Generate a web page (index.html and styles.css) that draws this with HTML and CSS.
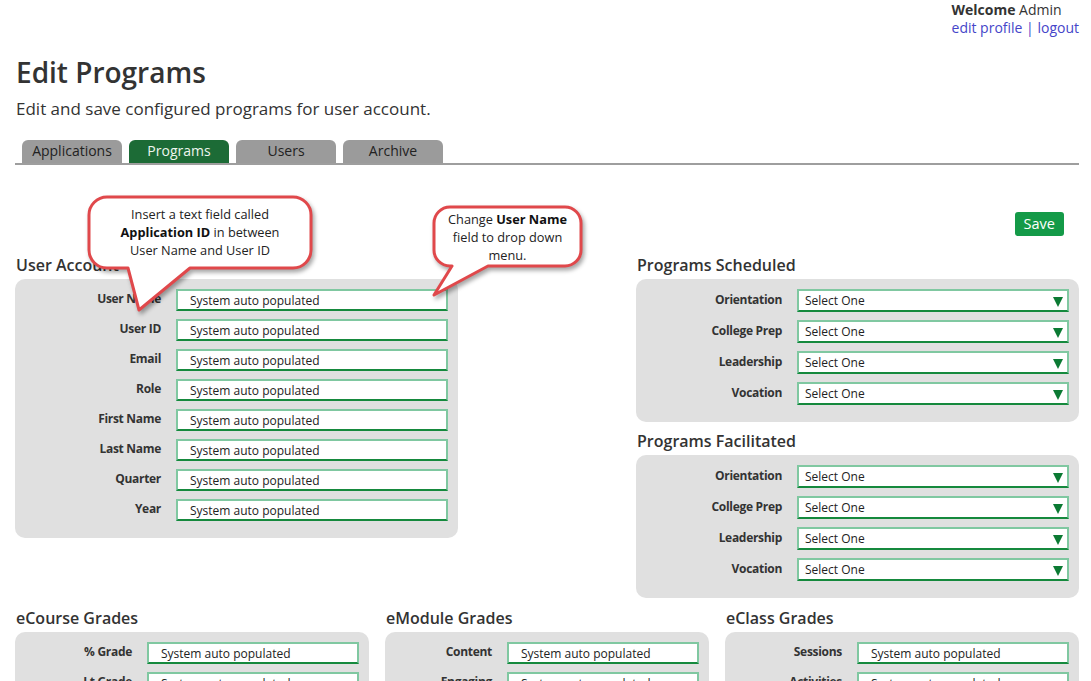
FILE: index.html
```html
<!DOCTYPE html>
<html lang="en">
<head>
<meta charset="utf-8">
<title>Edit Programs</title>
<link rel="stylesheet" href="styles.css">
</head>
<body>
<div class="page">
  <header class="topbar">
    <div class="user-box">
      <div><b>Welcome</b> Admin</div>
      <div><a class="link" href="#">edit profile</a> <span class="sep">|</span> <a class="link" href="#">logout</a></div>
    </div>
  </header>

  <h1 class="title">Edit Programs</h1>
  <p class="subtitle">Edit and save configured programs for user account.</p>

  <nav class="tabs">
    <span class="tab">Applications</span>
    <span class="tab tab-active">Programs</span>
    <span class="tab">Users</span>
    <span class="tab">Archive</span>
  </nav>

  <div class="save-row"><button class="save-btn">Save</button></div>

  <div class="columns">
    <section class="col">
      <h2 class="sec-title">User Account</h2>
      <div class="panel form">
        <label class="lbl">User Name</label><div class="field">System auto populated</div>
        <label class="lbl">User ID</label><div class="field">System auto populated</div>
        <label class="lbl">Email</label><div class="field">System auto populated</div>
        <label class="lbl">Role</label><div class="field">System auto populated</div>
        <label class="lbl">First Name</label><div class="field">System auto populated</div>
        <label class="lbl">Last Name</label><div class="field">System auto populated</div>
        <label class="lbl">Quarter</label><div class="field">System auto populated</div>
        <label class="lbl">Year</label><div class="field">System auto populated</div>
      </div>
    </section>

    <section class="col">
      <h2 class="sec-title">Programs Scheduled</h2>
      <div class="panel form form-select">
        <label class="lbl">Orientation</label><div class="select">Select One</div>
        <label class="lbl">College Prep</label><div class="select">Select One</div>
        <label class="lbl">Leadership</label><div class="select">Select One</div>
        <label class="lbl">Vocation</label><div class="select">Select One</div>
      </div>
      <h2 class="sec-title sec-next">Programs Facilitated</h2>
      <div class="panel form form-select">
        <label class="lbl">Orientation</label><div class="select">Select One</div>
        <label class="lbl">College Prep</label><div class="select">Select One</div>
        <label class="lbl">Leadership</label><div class="select">Select One</div>
        <label class="lbl">Vocation</label><div class="select">Select One</div>
      </div>
    </section>
  </div>

  <div class="grades">
    <section class="col">
      <h2 class="sec-title">eCourse Grades</h2>
      <div class="panel form form-grade">
        <label class="lbl">% Grade</label><div class="field">System auto populated</div>
        <label class="lbl">Lt Grade</label><div class="field">System auto populated</div>
      </div>
    </section>
    <section class="col">
      <h2 class="sec-title">eModule Grades</h2>
      <div class="panel form form-grade form-grade-mid">
        <label class="lbl">Content</label><div class="field">System auto populated</div>
        <label class="lbl">Engaging</label><div class="field">System auto populated</div>
      </div>
    </section>
    <section class="col">
      <h2 class="sec-title">eClass Grades</h2>
      <div class="panel form form-grade">
        <label class="lbl">Sessions</label><div class="field">System auto populated</div>
        <label class="lbl">Activities</label><div class="field">System auto populated</div>
      </div>
    </section>
  </div>

  <div class="callout callout-one">
    <svg class="bubble" width="240" height="130" viewBox="80 190 240 130" aria-hidden="true">
      <path d="M107 197 H293 A18 18 0 0 1 311 215 V250 A18 18 0 0 1 293 268 H190 L139 310 L128 268 H107 A18 18 0 0 1 89 250 V215 A18 18 0 0 1 107 197 Z"/>
    </svg>
    <div class="callout-text callout-text-one">Insert a text field called<br><b>Application ID</b> in between<br>User Name and User ID</div>
  </div>

  <div class="callout callout-two">
    <svg class="bubble" width="170" height="105" viewBox="425 200 170 105" aria-hidden="true">
      <path d="M450 207 H565 A16 16 0 0 1 581 223 V250 A16 16 0 0 1 565 266 H488 L434 295 L452 266 H450 A16 16 0 0 1 434 250 V223 A16 16 0 0 1 450 207 Z"/>
    </svg>
    <div class="callout-text callout-text-two">Change <b>User Name</b><br>field to drop down<br>menu.</div>
  </div>
</div>
</body>
</html>
```

FILE: styles.css
```css
* { box-sizing: border-box; }

html, body {
  margin: 0;
  padding: 0;
  background: #ffffff;
  overflow: hidden;
}

body {
  font-family: "Open Sans", "Liberation Sans", Arial, sans-serif;
  color: #333333;
}

.page {
  position: relative;
  width: 1091px;
  height: 681px;
  overflow: hidden;
  padding: 0 12px 0 15px;
}

/* header */
.topbar {
  display: flex;
  justify-content: flex-end;
  padding-top: 1px;
}

.user-box {
  font-size: 14px;
  line-height: 18px;
  color: #333333;
}

.user-box b { font-weight: 700; }

.link {
  color: #4545c9;
  text-decoration: none;
}

.sep { color: #4545c9; }

/* titles */
.title {
  margin: 20px 0 0 1px;
  font-size: 28px;
  line-height: 31px;
  font-weight: 600;
  color: #333333;
}

.subtitle {
  margin: 9px 0 0 1px;
  font-size: 17px;
  line-height: 24px;
  color: #333333;
}

/* tabs */
.tabs {
  display: flex;
  gap: 7px;
  margin-top: 19px;
  padding-left: 7px;
  border-bottom: 2px solid #9e9e9e;
}

.tab {
  width: 100px;
  height: 23px;
  line-height: 22px;
  text-align: center;
  font-size: 14px;
  color: #222222;
  background: #9b9b9b;
  border-radius: 6px 6px 0 0;
}

.tab-active {
  background: #1c6b36;
  color: #eef6ee;
}

/* save */
.save-row {
  display: flex;
  justify-content: flex-end;
  margin-top: 47px;
  padding-right: 15px;
}

.save-btn {
  height: 24px;
  padding: 0 9px;
  border: 0;
  border-radius: 3px;
  background: #149a48;
  color: #ffffff;
  font-family: inherit;
  font-size: 14.5px;
  line-height: 24px;
}

/* columns */
.columns {
  display: grid;
  grid-template-columns: 443px 443px;
  justify-content: space-between;
  margin-top: 19px;
}

.sec-title {
  margin: 0 0 4px 1px;
  font-size: 16px;
  line-height: 20px;
  font-weight: 600;
  color: #333333;
}

.sec-next { margin-top: 9px; }

.panel {
  background: #e0e0e0;
  border-radius: 10px;
}

.form {
  display: grid;
  grid-template-columns: 146px 1fr;
  column-gap: 15px;
  row-gap: 8px;
  align-items: center;
  padding: 10px 10px 17px 0;
}

.lbl {
  text-align: right;
  font-size: 12px;
  line-height: 18px;
  font-weight: 700;
  letter-spacing: -0.3px;
  color: #333333;
  margin-top: -2px;
}

.field,
.select {
  position: relative;
  height: 22px;
  padding: 1px 0 0 12px;
  background: #ffffff;
  border: 2px solid #80c8a1;
  border-bottom-color: #15893d;
  font-size: 12px;
  line-height: 18px;
  color: #222222;
  white-space: nowrap;
  overflow: hidden;
}

.select {
  height: 23px;
  padding-left: 6px;
}

.select::after {
  content: "";
  position: absolute;
  right: 4px;
  top: 6px;
  border-left: 5.5px solid transparent;
  border-right: 5.5px solid transparent;
  border-top: 10px solid #0b7a33;
}

/* grades */
.grades {
  display: grid;
  grid-template-columns: 354px 324px 354px;
  column-gap: 16px;
  margin-top: 10px;
}

.form-grade { grid-template-columns: 117px 1fr; }
.form-grade-mid { grid-template-columns: 107px 1fr; }

/* callouts */
.callout {
  position: absolute;
}

.callout-one { left: 80px; top: 190px; width: 240px; height: 130px; }
.callout-two { left: 425px; top: 200px; width: 170px; height: 105px; }

.bubble {
  display: block;
  overflow: visible;
  filter: drop-shadow(2px 3px 2px rgba(0, 0, 0, 0.35));
}

.bubble path {
  fill: #ffffff;
  stroke: #e0484b;
  stroke-width: 3;
  stroke-linejoin: round;
}

.callout-text {
  position: absolute;
  text-align: center;
  font-size: 12.75px;
  line-height: 18px;
  color: #222222;
}

.callout-text b { font-weight: 700; color: #111111; }

.callout-text-one { left: 9px; top: 15px; width: 222px; }
.callout-text-two { left: 9px; top: 10px; width: 147px; }
```
